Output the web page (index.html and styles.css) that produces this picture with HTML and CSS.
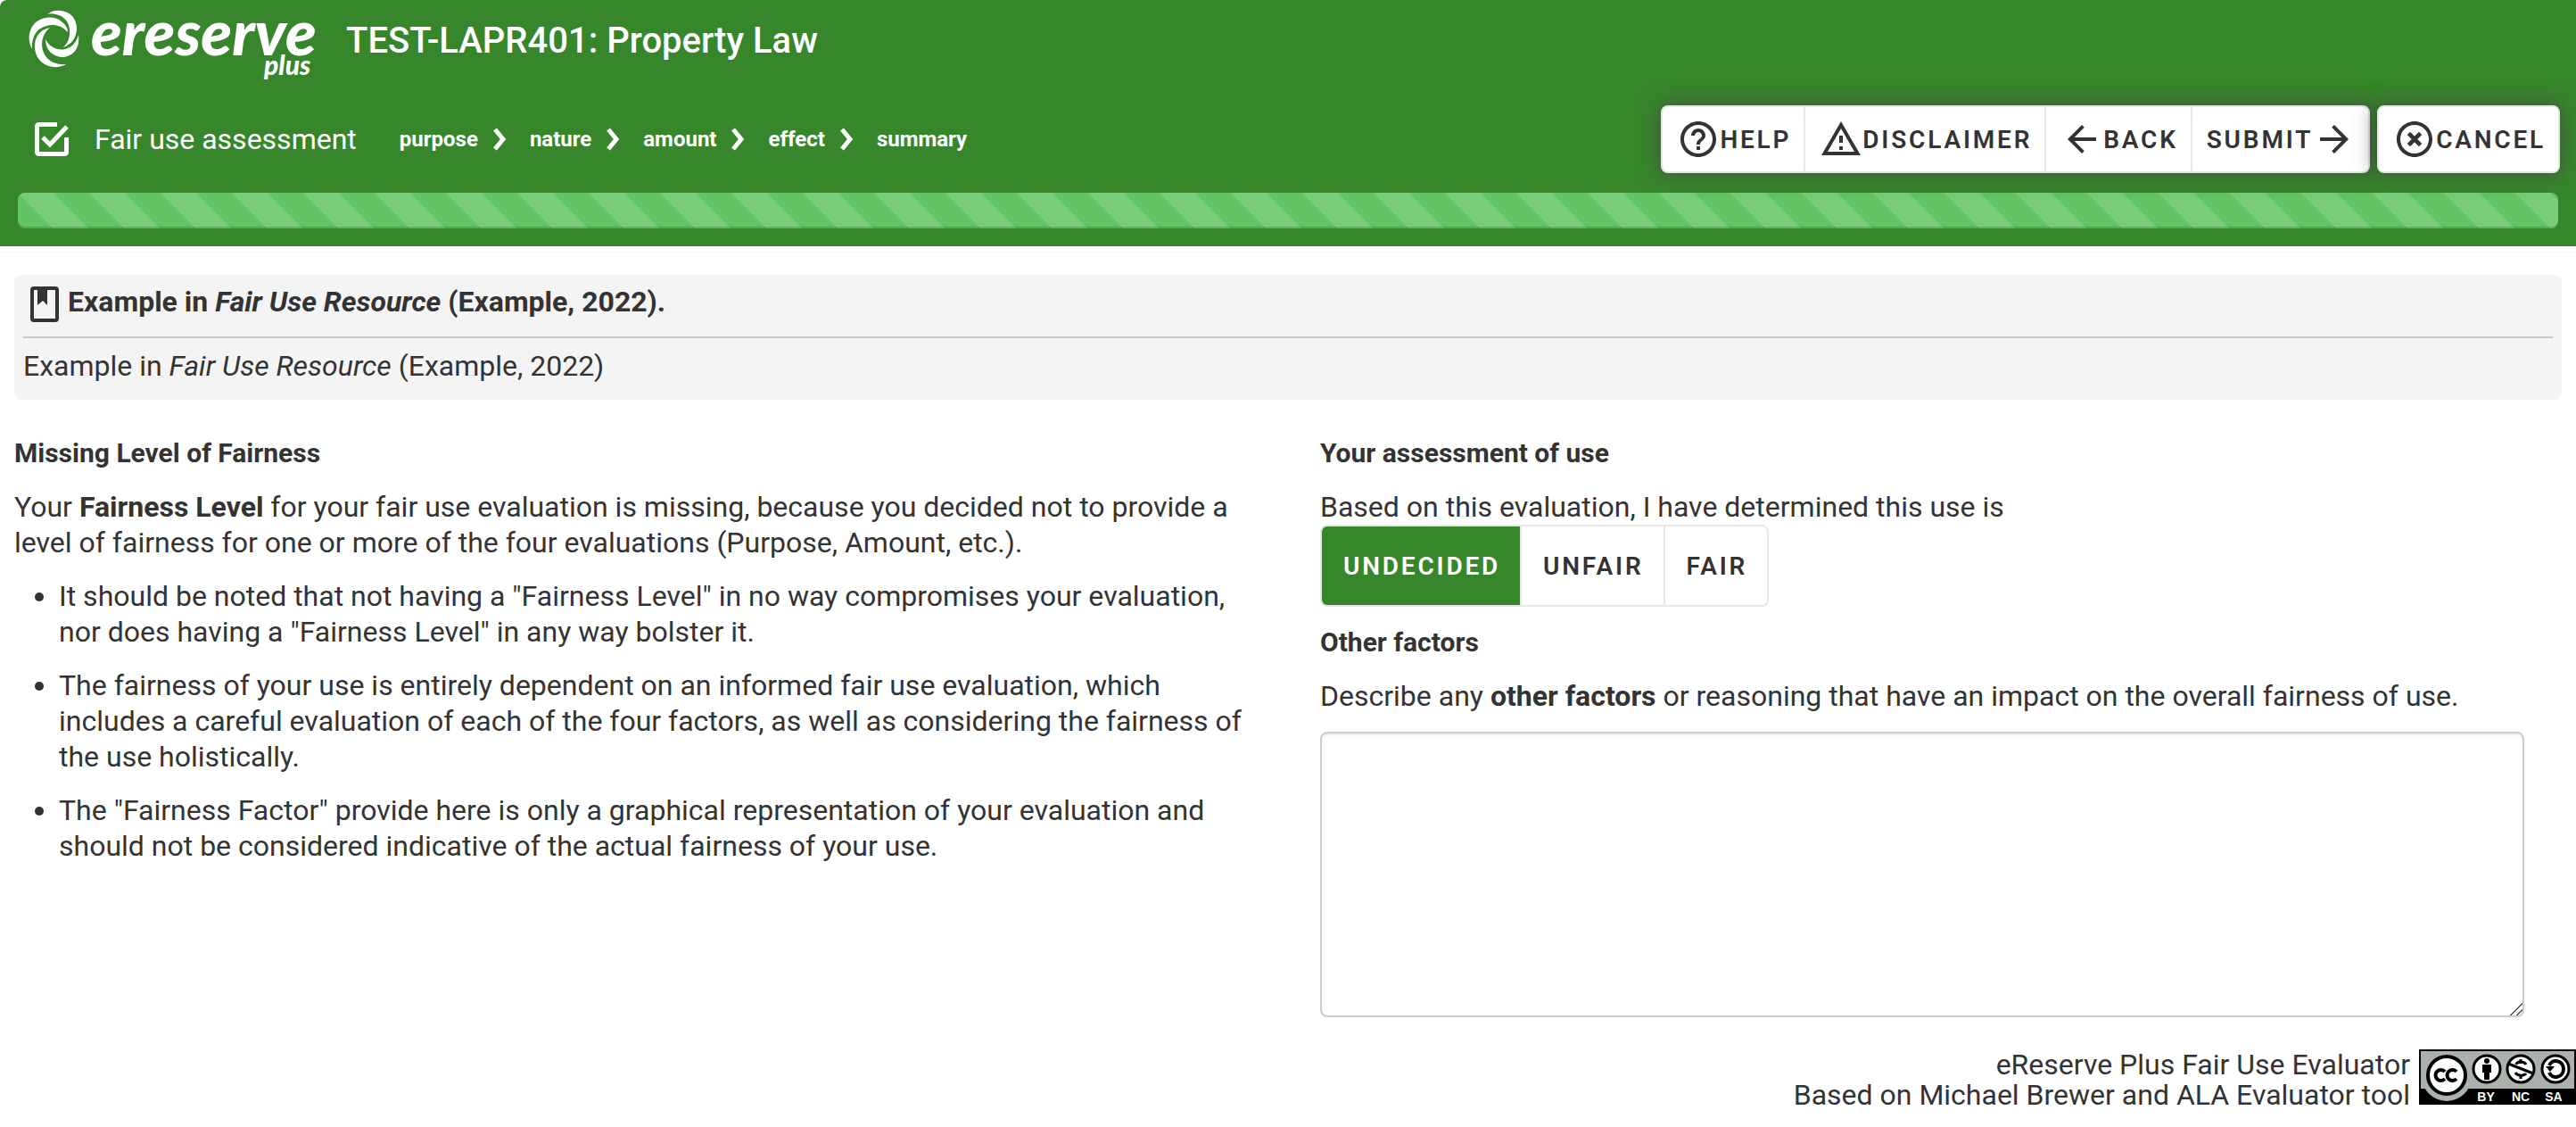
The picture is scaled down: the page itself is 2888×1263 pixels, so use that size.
FILE: index.html
```html
<!DOCTYPE html>
<html lang="en">
<head>
  <meta charset="UTF-8" />
  <title>Fair use assessment</title>
  <link rel="stylesheet" href="styles.css">
</head>
<body>
  <header class="page-header">
    <div class="brand-row">
      <svg class="logo" viewBox="0 0 320 84" role="img" aria-label="eReserve Plus">
        <g fill="#fff">
          <path d="M21 8C26 4 31 3 36 4C47 5 54 13 54 24C54 34 48 42 39 45C44 40 46 35 46 29C47 17 39 9 30 8C27 7 24 7 21 8z"/>
          <path d="M4 47C-3 34 2 20 11 15C19 10 31 10 38 17C42 20 44 24 44 28C36 20 28 19 20 21C9 24 3 33 4 47z"/>
          <path d="M24 23C15 30 13 42 17 51C21 61 31 65 42 64C35 68 27 68 20 65C11 61 6 51 7 42C8 31 14 25 24 23z"/>
          <path d="M19 36C24 45 32 49 41 47C49 45 54 39 56 31C58 46 50 55 39 56C27 56 19 48 19 36z"/>
        </g>
        <text class="logo-name" x="70" y="54">ereserve</text>
        <text class="logo-plus" x="264" y="76">plus</text>
      </svg>
      <h1>TEST-LAPR401: Property Law</h1>
    </div>

    <div class="nav-row">
      <svg class="check-icon" viewBox="0 0 38 38">
        <path d="M25 2.500H4.500a2 2 0 0 0-2 2v29a2 2 0 0 0 2 2h29a2 2 0 0 0 2-2V17M9 17l8 8L36 5" fill="none" stroke="#fff" stroke-width="5"/>
      </svg>
      <h2>Fair use assessment</h2>
      <nav class="steps">
        <a href="#purpose">purpose</a>
        <svg viewBox="0 0 16 26"><path d="M3 2l9 11-9 11"/></svg>
        <a href="#nature">nature</a>
        <svg viewBox="0 0 16 26"><path d="M3 2l9 11-9 11"/></svg>
        <a href="#amount">amount</a>
        <svg viewBox="0 0 16 26"><path d="M3 2l9 11-9 11"/></svg>
        <a href="#effect">effect</a>
        <svg viewBox="0 0 16 26"><path d="M3 2l9 11-9 11"/></svg>
        <a href="#summary">summary</a>
      </nav>
      <div class="btn-group toolbar">
        <button type="button">
          <svg viewBox="0 0 24 24"><path d="M11 18h2v-2h-2v2zm1-16C6.480 2 2 6.480 2 12s4.480 10 10 10 10-4.480 10-10S17.520 2 12 2zm0 18c-4.410 0-8-3.590-8-8s3.590-8 8-8 8 3.590 8 8-3.590 8-8 8zm0-14c-2.210 0-4 1.790-4 4h2c0-1.100.9-2 2-2s2 .9 2 2c0 2-3 1.750-3 5h2c0-2.250 3-2.500 3-5 0-2.210-1.790-4-4-4z"/></svg>
          Help
        </button>
        <button type="button">
          <svg viewBox="0 0 24 24"><path d="M12 5.990L19.530 19H4.470L12 5.990M12 2L1 21h22L12 2zm1 14h-2v2h2v-2zm0-6h-2v4h2v-4z"/></svg>
          Disclaimer
        </button>
        <button type="button">
          <svg viewBox="0 0 24 24"><path d="M20 11H7.830l5.590-5.590L12 4l-8 8 8 8 1.410-1.410L7.830 13H20v-2z"/></svg>
          Back
        </button>
        <button type="button">
          Submit
          <svg viewBox="0 0 24 24"><path d="M12 4l-1.410 1.410L16.170 11H4v2h12.170l-5.580 5.590L12 20l8-8z"/></svg>
        </button>
      </div>
      <div class="btn-group">
        <button type="button">
          <svg viewBox="0 0 24 24"><path d="M12 2C6.470 2 2 6.470 2 12s4.470 10 10 10 10-4.470 10-10S17.530 2 12 2zm0 18c-4.410 0-8-3.590-8-8s3.590-8 8-8 8 3.590 8 8-3.590 8-8 8z"/><path d="M8.700 8.700l6.600 6.600M15.300 8.700l-6.600 6.600" stroke="currentColor" stroke-width="2.400"/></svg>
          Cancel
        </button>
      </div>
    </div>

    <div class="progress"></div>
  </header>

  <main>
    <section class="citation">
      <h3>
        <svg viewBox="0 0 32 40">
          <path d="M4 2h24a2 2 0 0 1 2 2v32a2 2 0 0 1-2 2H4a2 2 0 0 1-2-2V4a2 2 0 0 1 2-2z" fill="none" stroke="#333" stroke-width="4"/>
          <path d="M8 3h11v18l-5-5-6 5z" fill="#333"/>
        </svg>
        <span>Example in <em>Fair Use Resource</em> (Example, 2022).</span>
      </h3>
      <p>Example in <em>Fair Use Resource</em> (Example, 2022)</p>
    </section>

    <div class="columns">
      <section>
        <h4>Missing Level of Fairness</h4>
        <p>Your <strong>Fairness Level</strong> for your fair use evaluation is missing, because you decided not to provide a level of fairness for one or more of the four evaluations (Purpose, Amount, etc.).</p>
        <ul>
          <li>It should be noted that not having a "Fairness Level" in no way compromises your evaluation, nor does having a "Fairness Level" in any way bolster it.</li>
          <li>The fairness of your use is entirely dependent on an informed fair use evaluation, which includes a careful evaluation of each of the four factors, as well as considering the fairness of the use holistically.</li>
          <li>The "Fairness Factor" provide here is only a graphical representation of your evaluation and should not be considered indicative of the actual fairness of your use.</li>
        </ul>
      </section>

      <section>
        <h4>Your assessment of use</h4>
        <div>Based on this evaluation, I have determined this use is</div>
        <div class="btn-group choices">
          <button type="button" class="active">Undecided</button>
          <button type="button">Unfair</button>
          <button type="button">Fair</button>
        </div>
        <h4>Other factors</h4>
        <label for="otherFactors">Describe any <strong>other factors</strong> or reasoning that have an impact on the overall fairness of use.</label>
        <textarea id="otherFactors"></textarea>
      </section>
    </div>
  </main>

  <footer>
    <p>eReserve Plus Fair Use Evaluator<br>Based on Michael Brewer and ALA Evaluator tool</p>
    <svg class="cc-badge" viewBox="0 0 176 62" role="img" aria-label="CC BY-NC-SA">
      <path d="M0 0h176v62H0z"/>
      <path d="M2 2h172v42H2z" fill="#aab2ab"/>
      <circle cx="31" cy="30" r="28" fill="#aab2ab"/>
      <circle cx="31" cy="29" r="21" fill="#fff" stroke="#000" stroke-width="4"/>
      <path d="M29 25a6 6 0 1 0 0 8M42 25a6 6 0 1 0 0 8" fill="none" stroke="#000" stroke-width="4"/>
      <g fill="#fff" stroke="#000" stroke-width="3">
        <circle cx="76" cy="22" r="15"/>
        <circle cx="114" cy="22" r="15"/>
        <circle cx="153" cy="22" r="15"/>
      </g>
      <circle cx="76" cy="13" r="3"/>
      <path d="M71 17h10v9h-2v8h-6v-8h-2z"/>
      <path d="M120 17c-2-4-10-4-11 0M108 26c2 4 10 4 12 1M114 11v5M114 28v5M100 16l28 11" fill="none" stroke="#000" stroke-width="3"/>
      <path d="M146 18c3-8 16-6 16 4s-13 12-16 4" fill="none" stroke="#000" stroke-width="4"/>
      <path d="M142 19h10l-5 6z"/>
      <text x="75" y="58">BY</text>
      <text x="114" y="58">NC</text>
      <text x="151" y="58">SA</text>
    </svg>
  </footer>
</body>
</html>
```
FILE: styles.css
```css
* {
  box-sizing: border-box;
}
body {
  margin: 0;
  font-family: Roboto, sans-serif;
  font-size: 32px;
  line-height: 40px;
  color: #333;
  background: #fff;
}
h1, h2, h3, h4, p {
  margin: 0;
}

/* header */
.page-header {
  background: #37862b;
  color: #fff;
  padding: 8px 20px 20px;
  border-top-left-radius: 8px;
}
.brand-row {
  display: flex;
  align-items: flex-start;
  gap: 36px;
  padding-left: 12px;
}
.logo {
  width: 320px;
  height: 84px;
  overflow: visible;
}
.logo text {
  font-family: Lato, sans-serif;
  font-style: italic;
  font-weight: 900;
  fill: #fff;
}
.logo-name {
  font-size: 71px;
}
.logo-plus {
  font-size: 30px;
}
h1 {
  font-size: 40px;
  font-weight: 500;
  line-height: 76px;
}
.nav-row {
  display: flex;
  align-items: center;
  margin-top: 26px;
  margin-right: -2px;
  padding-left: 18px;
}
.check-icon {
  width: 40px;
  height: 38px;
}
h2 {
  font-size: 32px;
  font-weight: 400;
  margin-left: 28px;
}
.steps {
  display: flex;
  align-items: center;
  margin-left: 48px;
}
.steps a {
  color: #fff;
  font-size: 24px;
  font-weight: 700;
  text-decoration: none;
}
.steps svg {
  width: 16px;
  height: 26px;
  margin: 0 26px 0 16px;
  fill: none;
  stroke: #fff;
  stroke-width: 5;
}
.toolbar {
  margin-left: auto;
  margin-right: 8px;
}

/* buttons */
.btn-group {
  display: inline-flex;
  border: 2px solid #e6e6e6;
  border-radius: 8px;
  background: #fff;
  overflow: hidden;
}
.page-header .btn-group {
  box-shadow: 0 0 24px rgba(66, 66, 66, 0.8);
}
.btn-group button {
  display: flex;
  align-items: center;
  height: 72px;
  padding: 0 14px 0 16px;
  border: 0;
  background: #fff;
  color: #333;
  font-family: inherit;
  font-size: 28px;
  font-weight: 600;
  letter-spacing: 0.1em;
  text-transform: uppercase;
  cursor: pointer;
}
.btn-group button + button {
  border-left: 2px solid #e6e6e6;
}
.btn-group svg {
  width: 48px;
  height: 48px;
  fill: currentColor;
}
.choices button {
  height: 88px;
  padding: 0 22px 0 24px;
}
.choices button.active {
  background: #37862b;
  color: #fff;
}

.progress {
  height: 40px;
  margin-top: 22px;
  border-radius: 8px;
  background-color: #62c462;
  background-image: linear-gradient(45deg, rgba(255, 255, 255, 0.15) 25%, transparent 25%, transparent 50%, rgba(255, 255, 255, 0.15) 50%, rgba(255, 255, 255, 0.15) 75%, transparent 75%);
  background-size: 80px 80px;
  box-shadow: inset 0 -2px 0 rgba(0, 0, 0, 0.15);
}

/* content */
main {
  padding: 32px 16px 0;
}
.citation {
  background: #f4f4f4;
  border-radius: 8px;
  padding: 10px 10px 18px;
}
.citation h3 {
  display: flex;
  gap: 10px;
  padding: 0 8px 16px;
  border-bottom: 2px solid #c8c8c8;
  font-size: 32px;
}
.citation h3 svg {
  width: 32px;
  height: 40px;
  margin-top: 3px;
}
.citation p {
  margin-top: 11px;
}
.columns {
  display: grid;
  grid-template-columns: 1fr 1fr;
  column-gap: 72px;
  margin-top: 40px;
}
h4 {
  font-size: 30px;
  margin-bottom: 20px;
}
ul {
  margin: 20px 0 0;
  padding-left: 50px;
}
li {
  margin-bottom: 20px;
}
.choices {
  margin-bottom: 20px;
}
textarea {
  display: block;
  width: 97%;
  height: 320px;
  margin-top: 20px;
  border: 2px solid #ccc;
  border-radius: 8px;
  box-shadow: inset 0 2px 2px rgba(0, 0, 0, 0.08);
  font: inherit;
}
textarea::-webkit-resizer {
  background: linear-gradient(135deg, transparent 50%, #555 50%, #555 58%, transparent 58%, transparent 74%, #555 74%, #555 82%, transparent 82%);
}

footer {
  display: flex;
  justify-content: flex-end;
  gap: 10px;
  margin-top: 36px;
}
footer p {
  line-height: 34px;
  text-align: right;
}
.cc-badge {
  width: 176px;
  height: 62px;
}
.cc-badge text {
  font-family: "Liberation Sans", sans-serif;
  font-size: 14px;
  font-weight: 700;
  fill: #fff;
  text-anchor: middle;
}
```
